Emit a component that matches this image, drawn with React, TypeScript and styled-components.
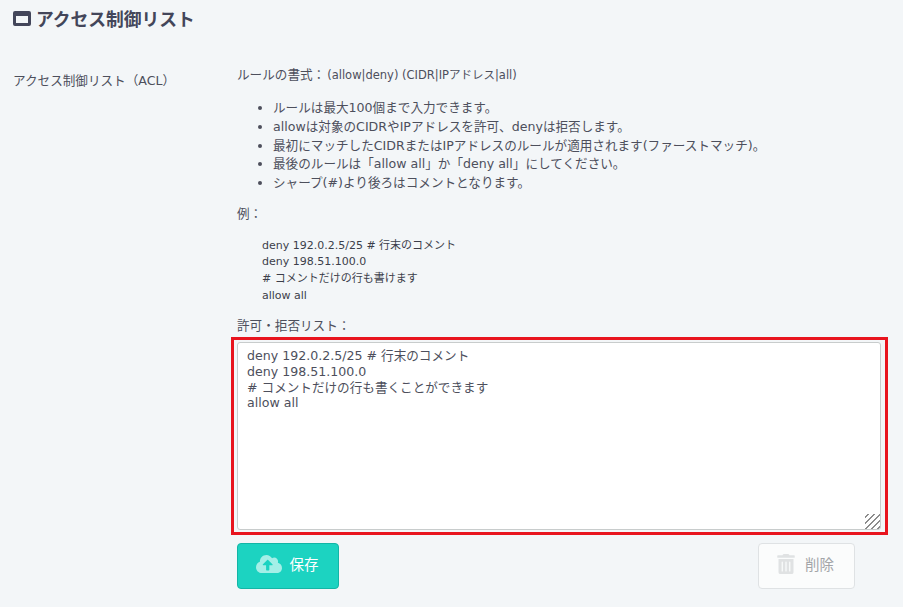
import styled, { createGlobalStyle } from "styled-components";
import { FaCloudUploadAlt, FaTrashAlt } from "react-icons/fa";

const GlobalStyle = createGlobalStyle`
  html, body {
    margin: 0;
    height: 100%;
    background: #f3f6f8;
  }
  body {
    font-family: "DejaVu Sans", "Noto Sans CJK JP", sans-serif;
    color: #4d4f5c;
    font-size: 12.6px;
    overflow: hidden;
  }
`;

const Page = styled.div`
  width: 903px;
  height: 607px;
  padding: 6px 0 0 13px;
  box-sizing: border-box;
`;

const Title = styled.h2`
  display: flex;
  align-items: center;
  gap: 5px;
  height: 24px;
  margin: 0 0 35px;
  font-size: 17.75px;
  font-weight: 700;
  color: #43465a;
`;

const WindowIcon = styled.span`
  width: 18px;
  height: 15px;
  box-sizing: border-box;
  border: 3px solid #43465a;
  border-top-width: 5px;
  border-radius: 2px;
`;

const Row = styled.div`
  display: grid;
  grid-template-columns: 224px 657px;
`;

const Label = styled.div`
  padding-top: 6px;
  line-height: 20px;
`;

const Content = styled.div`
  display: flex;
  flex-direction: column;
`;

const Format = styled.div`
  line-height: 20px;
  height: 20px;
`;

const Small = styled.span`
  margin-left: -2px;
  font-size: 11.5px;
`;

const Rules = styled.ul`
  margin: 14px 0 0;
  padding: 0 0 0 36px;
  line-height: 18.75px;
`;

const SubLabel = styled.div<{ $top: number }>`
  margin-top: ${(p) => p.$top}px;
  line-height: 20px;
`;

const Example = styled.pre`
  margin: 14px 0 0 25px;
  font-family: inherit;
  font-size: 11px;
  line-height: 16.6px;
  color: #3c3e4a;
`;

const Highlight = styled.div`
  display: flex;
  margin: 1px 0 0 -6px;
  width: 657px;
  height: 198px;
  box-sizing: border-box;
  padding: 2px 4px 2px 3px;
  border: 3px solid #e8141e;
`;

const Area = styled.textarea`
  flex: 1;
  box-sizing: border-box;
  padding: 5px 9px;
  border: 1px solid #c8cccc;
  border-radius: 3px;
  background: #fff;
  font-family: inherit;
  font-size: 12.6px;
  line-height: 15.7px;
  color: #4d4f5c;
  outline: none;
  resize: both;
  &::-webkit-resizer {
    background: repeating-linear-gradient(
      135deg,
      transparent 0 2px,
      #8c8c8c 2px 3.4px,
      transparent 3.4px 4.2px
    );
    clip-path: polygon(100% 0, 100% 100%, 0 100%);
  }
`;

const Actions = styled.div`
  display: flex;
  justify-content: space-between;
  margin-top: 8px;
  width: 618px;
`;

const Button = styled.button<{ $primary?: boolean; $width: number }>`
  display: flex;
  align-items: center;
  justify-content: center;
  gap: ${(p) => (p.$primary ? 8 : 9)}px;
  width: ${(p) => p.$width}px;
  height: 46px;
  padding: 0 ${(p) => (p.$primary ? 2 : 3)}px 5px 0;
  border: 1px solid ${(p) => (p.$primary ? "#13b5a6" : "#dfe2e4")};
  border-radius: 4px;
  background: ${(p) => (p.$primary ? "#1cd3c1" : "#fbfcfc")};
  color: ${(p) => (p.$primary ? "#fff" : "#a3a5a8")};
  font-family: inherit;
  font-size: 14.5px;
  svg {
    color: ${(p) => (p.$primary ? "#a4efe7" : "#e0e2e3")};
  }
`;

export default function App() {
  return (
    <>
      <GlobalStyle />
      <Page>
        <Title>
          <WindowIcon />
          アクセス制御リスト
        </Title>
        <Row>
          <Label>アクセス制御リスト（ACL）</Label>
          <Content>
            <Format>
              ルールの書式： <Small>(allow|deny) (CIDR|IPアドレス|all)</Small>
            </Format>
            <Rules>
              <li>ルールは最大100個まで入力できます。</li>
              <li>allowは対象のCIDRやIPアドレスを許可、denyは拒否します。</li>
              <li>最初にマッチしたCIDRまたはIPアドレスのルールが適用されます(ファーストマッチ)。</li>
              <li>最後のルールは「allow all」か「deny all」にしてください。</li>
              <li>シャープ(#)より後ろはコメントとなります。</li>
            </Rules>
            <SubLabel $top={11}>例：</SubLabel>
            <Example>{`deny 192.0.2.5/25 # 行末のコメント
deny 198.51.100.0
# コメントだけの行も書けます
allow all`}</Example>
            <SubLabel $top={12}>許可・拒否リスト：</SubLabel>
            <Highlight>
              <Area
                readOnly
                value={`deny 192.0.2.5/25 # 行末のコメント
deny 198.51.100.0
# コメントだけの行も書くことができます
allow all`}
              />
            </Highlight>
            <Actions>
              <Button $primary $width={102}>
                <FaCloudUploadAlt size={26} />
                保存
              </Button>
              <Button $width={97}>
                <FaTrashAlt size={20} />
                削除
              </Button>
            </Actions>
          </Content>
        </Row>
      </Page>
    </>
  );
}
